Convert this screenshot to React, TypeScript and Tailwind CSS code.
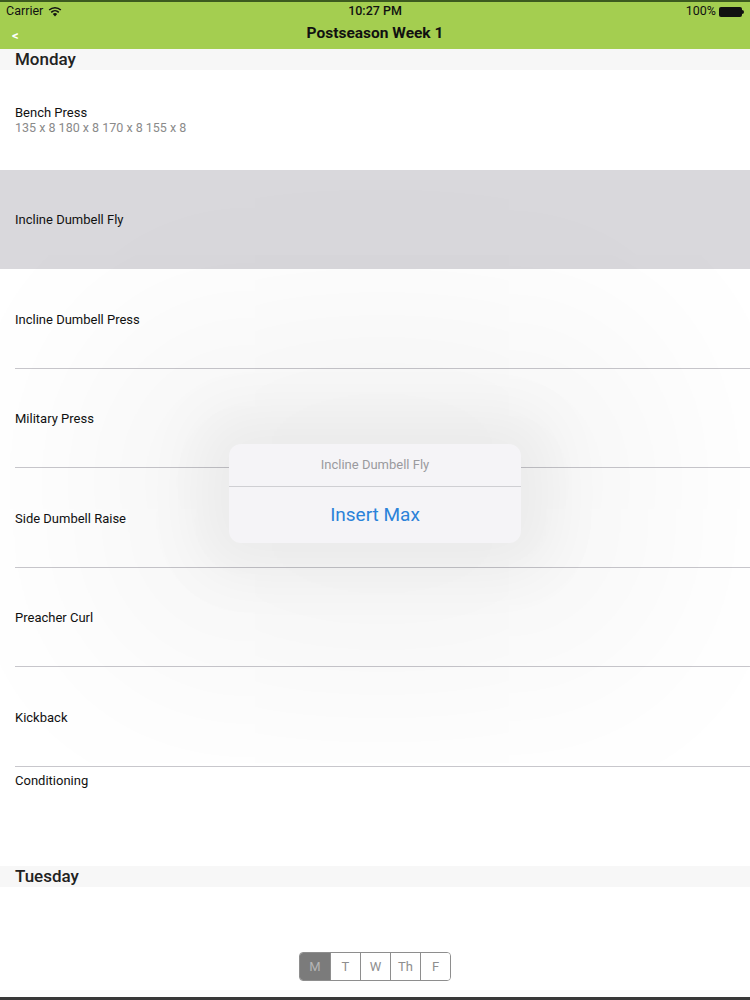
import React from "react";

interface Exercise {
  name: string;
  sets?: string;
  selected?: boolean;
  top?: boolean;
  noLine?: boolean;
}

const monday: Exercise[] = [
  { name: "Bench Press", sets: "135 x 8 180 x 8 170 x 8 155 x 8", noLine: true },
  { name: "Incline Dumbell Fly", selected: true, noLine: true },
  { name: "Incline Dumbell Press" },
  { name: "Military Press" },
  { name: "Side Dumbell Raise" },
  { name: "Preacher Curl" },
  { name: "Kickback" },
  { name: "Conditioning", top: true, noLine: true },
];

const days = ["M", "T", "W", "Th", "F"];

const SectionHeader: React.FC<{ title: string }> = ({ title }) => (
  <div className="h-[21px] bg-[#f7f7f7] px-[15px] flex items-center">
    <span className="text-[17px] font-medium text-[#222] leading-none">{title}</span>
  </div>
);

const ExerciseRow: React.FC<{ item: Exercise }> = ({ item }) => (
  <div
    className={`relative h-[99.5px] flex flex-col px-[15px] ${
      item.top ? "justify-start pt-[5px]" : "justify-center"
    } ${item.selected ? "bg-[#d9d8dc]" : ""}`}
  >
    <span className="text-[13px] text-[#111] leading-[15px] mt-px">{item.name}</span>
    {item.sets && (
      <span className="text-[12.5px] text-[#8a8a8a] leading-[15px]">{item.sets}</span>
    )}
    {!item.noLine && (
      <div className="absolute left-[15px] right-0 bottom-0 h-px bg-[#c8c7cc]" />
    )}
  </div>
);

export default function App() {
  return (
    <div
      className="relative w-[750px] h-[1000px] overflow-hidden bg-white flex flex-col"
      style={{ fontFamily: "Roboto, 'Liberation Sans', sans-serif" }}
    >
      {/* status + nav bar */}
      <div className="bg-[#a4ce50] border-t-2 border-[#3c5a1f] h-[49px] flex flex-col">
        <div className="h-[19px] flex items-center justify-between px-[6px] text-[12.5px] text-[#111]">
          <div className="flex items-center gap-[5px] w-[120px]">
            <span>Carrier</span>
            <svg width="14" height="11" viewBox="0 0 14 11">
              <path d="M7 10.5 L4.8 8 A3.2 3.2 0 0 1 9.2 8 Z" fill="#111" />
              <path d="M3.2 6.3 A5.5 5.5 0 0 1 10.8 6.3" stroke="#111" strokeWidth="1.6" fill="none" />
              <path d="M1.2 4 A8.4 8.4 0 0 1 12.8 4" stroke="#111" strokeWidth="1.6" fill="none" />
            </svg>
          </div>
          <span className="font-medium">10:27 PM</span>
          <div className="flex items-center justify-end gap-[3px] w-[120px]">
            <span>100%</span>
            <div className="flex items-center">
              <div className="w-[23px] h-[10px] rounded-[2px] bg-[#111]" />
              <div className="w-[2px] h-[4px] bg-[#111] rounded-r-sm" />
            </div>
          </div>
        </div>
        <div className="relative flex-1 flex items-center justify-center">
          <span className="absolute left-[12px] top-[5px] text-white font-bold text-[13px]">&lt;</span>
          <span className="text-[15.5px] font-bold text-[#111] -mt-[3px]">Postseason Week 1</span>
        </div>
      </div>

      <SectionHeader title="Monday" />
      {monday.map((e) => (
        <ExerciseRow key={e.name} item={e} />
      ))}
      <SectionHeader title="Tuesday" />
      <div className="flex-1 flex flex-col justify-end items-center pb-[16px]">
        <div className="flex h-[29px] border border-[#8e8e8e] rounded-[4px] overflow-hidden">
          {days.map((d, i) => (
            <div
              key={d}
              className={`w-[30px] flex items-center justify-center text-[13px] ${
                i === 0 ? "bg-[#7b7b7b] text-[#b5b5b5]" : "bg-white text-[#8e8e8e] border-l border-[#8e8e8e]"
              }`}
            >
              {d}
            </div>
          ))}
        </div>
      </div>
      <div className="h-[3px] bg-[#3a3a3a]" />

      {/* action popover */}
      <div className="absolute left-[229px] top-[444px] w-[292px] rounded-[12px] bg-[#f5f4f7] shadow-[0_0_60px_30px_rgba(0,0,0,0.05),0_0_220px_120px_rgba(0,0,0,0.05)] flex flex-col">
        <div className="h-[43px] flex items-center justify-center text-[13px] text-[#9a9a9e] border-b border-[#cfcfd3]">
          Incline Dumbell Fly
        </div>
        <div className="h-[56px] flex items-center justify-center text-[19px] text-[#2b82d9]">
          Insert Max
        </div>
      </div>
    </div>
  );
}
